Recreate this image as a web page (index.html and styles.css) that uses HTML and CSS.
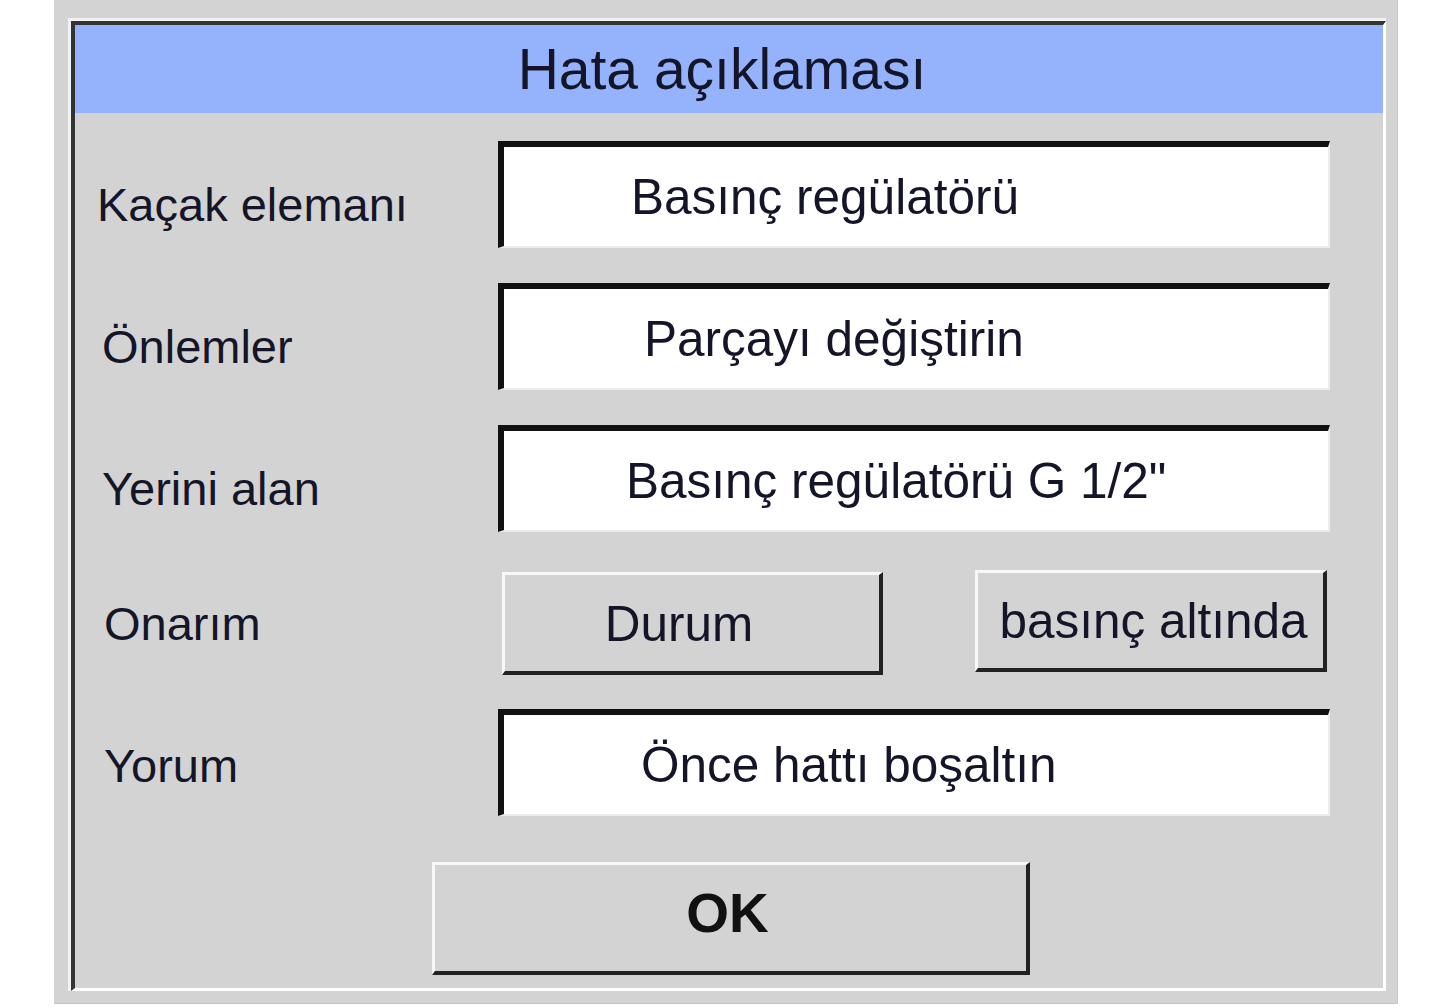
FILE: index.html
```html
<!DOCTYPE html>
<html lang="tr">
<head>
    <meta charset="UTF-8">
    <meta name="viewport" content="width=device-width, initial-scale=1.0">
    <title>Hata açıklaması</title>
    <link rel="stylesheet" href="styles.css">
</head>
<body>
    <div class="screen">
        <div class="dialog">
            <div class="dialog-inner">
                <div class="title-bar">Hata açıklaması</div>
                <div class="form">
                    <div class="label label-leak">Kaçak elemanı</div>
                    <div class="field">Basınç regülatörü</div>

                    <div class="label">Önlemler</div>
                    <div class="field field-action">Parçayı değiştirin</div>

                    <div class="label">Yerini alan</div>
                    <div class="field field-spare">Basınç regülatörü G 1/2"</div>

                    <div class="label label-btn">Onarım</div>
                    <div class="button-row">
                        <button class="btn btn-state">Durum</button>
                        <button class="btn btn-pressure">basınç altında</button>
                    </div>

                    <div class="label label-btn">Yorum</div>
                    <div class="field field-note">Önce hattı boşaltın</div>
                </div>
                <div class="footer">
                    <button class="btn btn-ok">OK</button>
                </div>
            </div>
        </div>
    </div>
</body>
</html>
```

FILE: styles.css
```css
body {
    margin: 0;
    background-color: #fff;
    font-family: 'Liberation Sans', Arial, sans-serif;
    color: #15152a;
}
.screen {
    margin-left: 54px;
    width: 1344px;
    height: 1004px;
    background-color: #d3d3d3;
    border-bottom: 1px solid #c4c4c4;
    border-right: 1px solid #c8c8c8;
    padding: 18px 0 0 14px;
    box-sizing: border-box;
}
.dialog {
    width: 1318px;
    height: 973px;
    border-top: 3px solid #f2f2f2;
    border-left: 3px solid #f2f2f2;
    box-sizing: border-box;
}
.dialog-inner {
    height: 100%;
    border-top: 4px solid #333;
    border-left: 4px solid #333;
    border-right: 3px solid #fff;
    border-bottom: 3px solid #fff;
    box-sizing: border-box;
    display: flex;
    flex-direction: column;
}
.title-bar {
    height: 88px;
    background-color: #95b3fd;
    border-bottom: 1px solid #d8d2c4;
    display: flex;
    align-items: center;
    justify-content: center;
    font-size: 57px;
    padding-right: 14px;
}
.form {
    display: grid;
    grid-template-columns: 423px 832px;
    grid-auto-rows: 107px;
    row-gap: 35px;
    padding-top: 27px;
}
.label {
    display: flex;
    align-items: center;
    padding: 20px 0 0 27px;
    font-size: 47px;
}
.label-leak {
    padding-left: 22px;
}
.label-btn {
    padding-top: 6px;
    padding-left: 29px;
}
.field {
    background-color: #fff;
    border-top: 6px solid #111;
    border-left: 6px solid #111;
    border-right: 2px solid #ececec;
    border-bottom: 2px solid #ececec;
    display: flex;
    align-items: center;
    padding-left: 127px;
    font-size: 49.5px;
}
.field-action {
    padding-left: 140px;
}
.field-spare {
    padding-left: 122px;
}
.field-note {
    padding-left: 137px;
}
.button-row {
    display: flex;
    justify-content: space-between;
    align-items: center;
    padding-left: 4px;
}
.btn {
    background-color: #d3d3d3;
    border-top: 3px solid #f8f8f8;
    border-left: 3px solid #f8f8f8;
    border-right: 4px solid #222;
    border-bottom: 4px solid #222;
    font-family: 'Liberation Sans', Arial, sans-serif;
    color: #15152a;
    font-size: 49.5px;
    padding: 0;
}
.btn-state {
    width: 381px;
    height: 103px;
    margin-top: 6px;
    padding-right: 26px;
}
.btn-pressure {
    width: 352px;
    height: 102px;
    margin-right: 3px;
    padding-left: 6px;
}
.footer {
    display: flex;
    justify-content: center;
    padding-top: 46px;
}
.btn-ok {
    width: 598px;
    height: 113px;
    margin-left: 4px;
    padding-bottom: 10px;
    padding-right: 6px;
    font-size: 55px;
    font-weight: bold;
    color: #111;
}
```
